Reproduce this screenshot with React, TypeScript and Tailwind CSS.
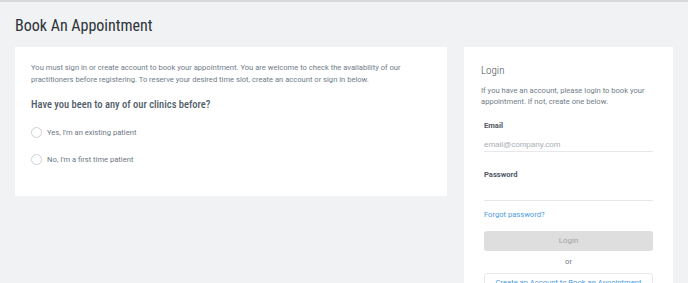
import React from 'react';

const Radio: React.FC<{ label: string }> = ({ label }) => (
  <label className="flex items-center h-[11px] gap-[5px] text-[7.6px] leading-[11px] text-[#6e7883]">
    <span className="w-[11px] h-[11px] rounded-full border border-[#cdd1d6] bg-white shrink-0" />
    {label}
  </label>
);

const App: React.FC = () => {
  return (
    <div className="min-h-screen bg-[#f1f2f4] border-t-2 border-[#d6d8dc] font-['Roboto',sans-serif] overflow-hidden">
      <div className="px-[15px]">
        <h1 className="pt-[14px] text-[16px] font-['Roboto_Condensed','Roboto',sans-serif] font-normal text-[#2c3339] leading-[20px]">
          Book An Appointment
        </h1>

        <div className="mt-[11px] flex items-start gap-[17px]">
          {/* Left card */}
          <div className="w-[433px] h-[149px] bg-white px-[16px] pt-[15px]">
            <p className="text-[7.6px] leading-[11.5px] text-[#717c88]">
              You must sign in or create account to book your appointment. You are welcome to check the availability of our practitioners before registering. To reserve your desired time slot, create an account or sign in below.
            </p>
            <h2 className="mt-[12px] text-[10.5px] font-['Roboto_Condensed','Roboto',sans-serif] font-medium text-[#525d69] leading-[16px]">
              Have you been to any of our clinics before?
            </h2>
            <div className="mt-[13.5px] flex flex-col gap-[16.5px]">
              <Radio label="Yes, I'm an existing patient" />
              <Radio label="No, I'm a first time patient" />
            </div>
          </div>

          {/* Right card */}
          <div className="w-[209px] h-[260px] bg-white px-[17px] pt-[17px]">
            <h3 className="text-[11px] font-['Roboto_Condensed','Roboto',sans-serif] font-light text-[#4a5058] leading-[14px]">Login</h3>
            <p className="mt-[7px] text-[7.6px] leading-[11px] text-[#717c88]">
              If you have an account, please login to book your appointment. If not, create one below.
            </p>
            <div className="px-[3px]">
              <div className="mt-[14px] text-[7.6px] font-bold text-[#4f5965] leading-[10px]">Email</div>
              <div className="mt-[8px] border-b border-[#e6e8eb] text-[8px] font-['Liberation_Sans',sans-serif] text-[#a7adb4] leading-[12px]">
                email@company.com
              </div>
              <div className="mt-[18px] text-[7.6px] font-bold text-[#4f5965] leading-[10px]">Password</div>
              <div className="h-[21px] border-b border-[#e6e8eb]" />
              <div className="mt-[8px] text-[7.6px] text-[#4a9be0] leading-[12px]">Forgot password?</div>
              <button className="mt-[10px] w-[169px] h-[20px] rounded-[3px] bg-[#dedede] text-[8px] text-[#a3a3a3] leading-[20px]">
                Login
              </button>
              <div className="mt-[6px] text-center text-[7.6px] text-[#6e7a87] leading-[10px]">or</div>
              <button className="mt-[6px] w-[169px] h-[20px] rounded-[3px] border border-[#e6e8eb] bg-white text-[7.6px] text-[#4a9be0] leading-[18px]">
                Create an Account to Book an Appointment
              </button>
            </div>
          </div>
        </div>
      </div>
    </div>
  );
};

export default App;
